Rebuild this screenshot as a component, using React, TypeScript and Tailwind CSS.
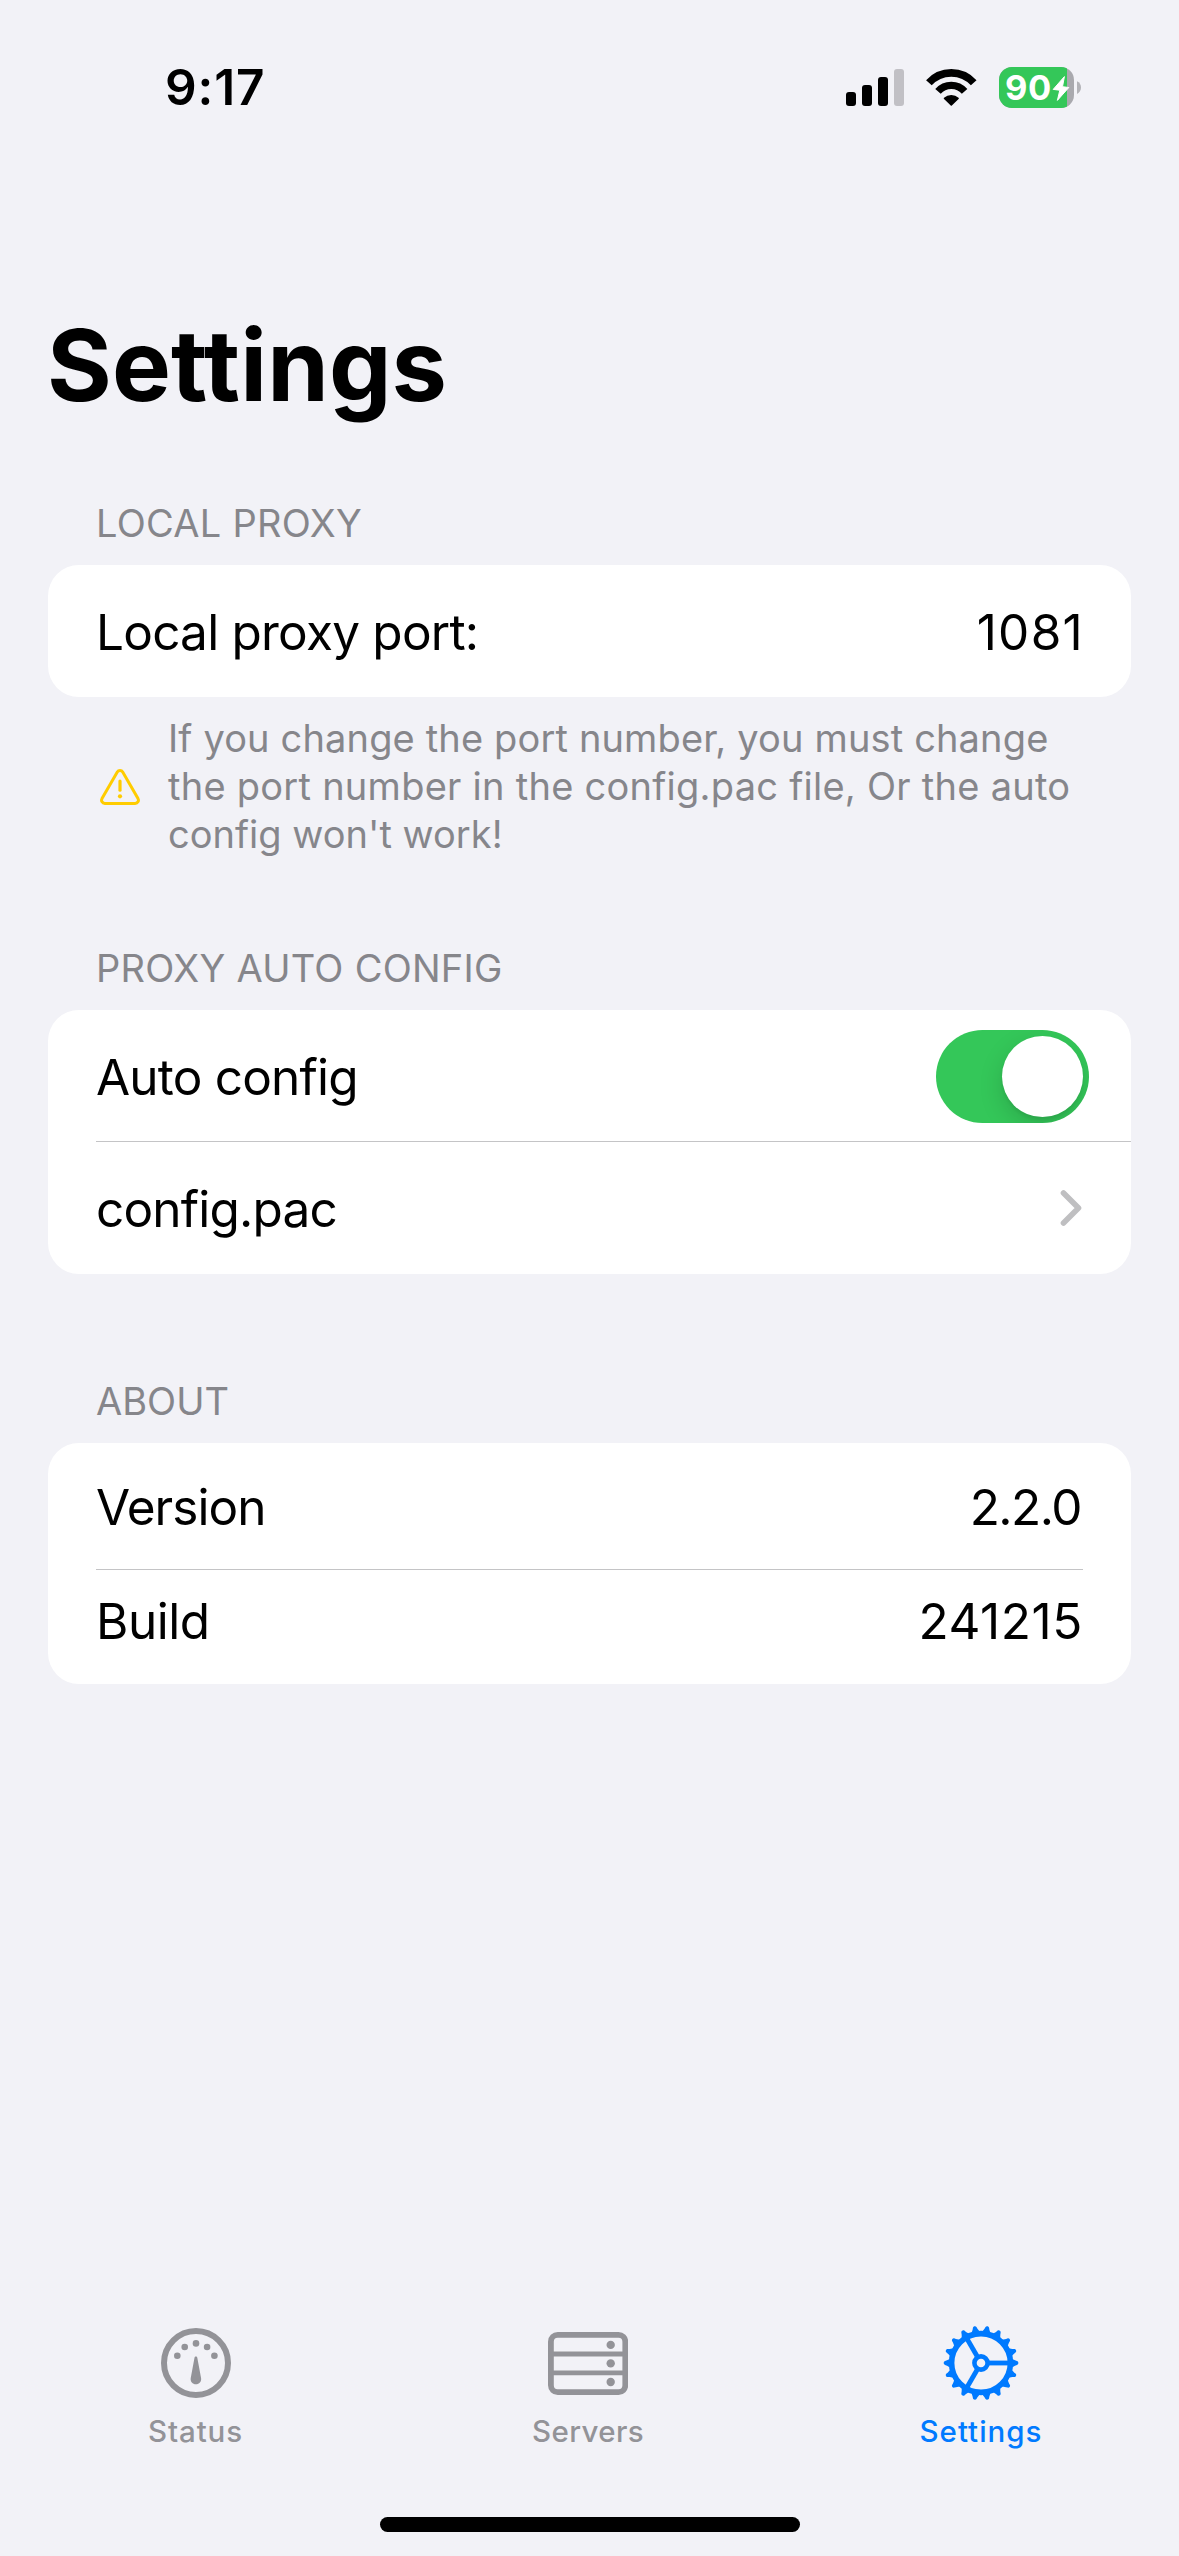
import type { ReactNode } from "react";

function SignalIcon() {
  return (
    <svg width="58" height="37" viewBox="0 0 58 37">
      <rect x="0" y="23" width="10" height="14" rx="3" fill="#000" />
      <rect x="16" y="16" width="10" height="21" rx="3" fill="#000" />
      <rect x="32" y="8" width="10" height="29" rx="3" fill="#000" />
      <rect x="48" y="0" width="10" height="37" rx="3" fill="#c1c0c5" />
    </svg>
  );
}

function WifiIcon() {
  return (
    <svg width="51" height="37" viewBox="0 0 51 37" fill="none" stroke="#000">
      <path d="M2.9 13.8A30.2 30.2 0 0 1 47.7 13.8" strokeWidth="7.6" />
      <path d="M12 22.3A17.7 17.7 0 0 1 38.6 22.3" strokeWidth="7.3" />
      <path d="M18.6 29.4A9.6 9.6 0 0 1 32 29.4L25.3 36Z" fill="#000" strokeWidth="1.6" strokeLinejoin="round" />
    </svg>
  );
}

function Battery() {
  return (
    <div className="relative flex h-[41px] w-[82px] items-start">
      <svg className="absolute inset-0" width="82" height="41" viewBox="0 0 82 41">
        <defs>
          <clipPath id="shell">
            <rect width="75" height="41" rx="13" />
          </clipPath>
        </defs>
        <g clipPath="url(#shell)">
          <rect width="75" height="41" fill="#a9a9ae" />
          <rect width="68" height="41" fill="#34c759" />
        </g>
        <path d="M78 14.2C80.6 15.3 82 17.8 82 20.6S80.6 25.9 78 27Z" fill="#b3b3b8" />
        <path
          d="M65.4 9.6L54.2 22.4L60.8 23.2L58.4 33.4L69.8 20.5L63.5 19.7Z"
          fill="#fff"
          stroke="#fff"
          strokeWidth="1"
          strokeLinejoin="round"
        />
      </svg>
      <span className="relative ml-[6px] text-[34.5px] leading-[41px] font-bold tracking-[0.5px] text-white">90</span>
    </div>
  );
}

function WarningIcon() {
  return (
    <svg width="40" height="36" viewBox="0 0 40 36" fill="none" stroke="#ffcc00" strokeWidth="3">
      <path
        d="M17.3 3.1C18.5 1.1 21.5 1.1 22.7 3.1L38 29.6C39.2 31.8 37.7 34.4 35.2 34.4H4.8C2.3 34.4 .8 31.8 2 29.6Z"
        strokeLinejoin="round"
      />
      <path d="M20 12V21.2" strokeWidth="3.2" strokeLinecap="round" />
      <circle cx="20" cy="27.3" r="2.1" fill="#ffcc00" stroke="none" />
    </svg>
  );
}

function GaugeIcon() {
  return (
    <svg width="70" height="70" viewBox="0 0 70 70" fill="currentColor">
      <circle cx="35" cy="35" r="32" fill="none" stroke="currentColor" strokeWidth="6" />
      <circle cx="16.3" cy="27.7" r="3.3" />
      <circle cx="23.7" cy="19" r="3.3" />
      <circle cx="35" cy="15.4" r="3.3" />
      <circle cx="46.1" cy="19" r="3.3" />
      <circle cx="53.4" cy="27.7" r="3.3" />
      <path d="M33.5 29.8C33.7 28.1 36.1 28.1 36.3 29.8L40.1 50.2C40.6 53.6 38.2 56.2 34.9 56.2S29.2 53.6 29.7 50.2Z" />
    </svg>
  );
}

function ServersIcon() {
  return (
    <svg width="80" height="63" viewBox="0 0 80 63" fill="currentColor">
      <rect x="2.9" y="2.9" width="74.4" height="57.2" rx="6.8" fill="none" stroke="currentColor" strokeWidth="5.8" />
      <path d="M3 22H77M3 40.9H77" stroke="currentColor" strokeWidth="4.8" />
      <circle cx="62.7" cy="12.9" r="4.2" />
      <circle cx="62.7" cy="31.4" r="4.2" />
      <circle cx="62.7" cy="50" r="4.2" />
    </svg>
  );
}

const teeth = Array.from({ length: 18 }, (_, i) => i * 20);
const spokes = [0, 120, 240];

function GearIcon() {
  return (
    <svg width="76" height="76" viewBox="-38 -38 76 76" fill="currentColor">
      <circle r="29.4" fill="none" stroke="currentColor" strokeWidth="5.6" />
      <circle r="6.6" fill="none" stroke="currentColor" strokeWidth="4.6" />
      {teeth.map((a) => (
        <path
          key={a}
          d="M31 -4.2C33 -3.4 34 -2.4 36 -1.9C37.8 -1.4 37.8 1.4 36 1.9C34 2.4 33 3.4 31 4.2Z"
          transform={`rotate(${a})`}
        />
      ))}
      {spokes.map((a) => (
        <path key={a} d="M8 0H28" stroke="currentColor" strokeWidth="4.8" transform={`rotate(${a})`} />
      ))}
    </svg>
  );
}

function SectionTitle({ children }: { children: ReactNode }) {
  return <h2 className="ml-[96px] h-[46px] text-[38px] leading-[46px] text-[#86868b]">{children}</h2>;
}

function Card({ children }: { children: ReactNode }) {
  return <div className="mx-12 mt-[19px] overflow-hidden rounded-[31px] bg-white">{children}</div>;
}

function Tab({ icon, children, active }: { icon: ReactNode; children: ReactNode; active?: boolean }) {
  return (
    <div className={active ? "flex flex-1 flex-col items-center text-[#007aff]" : "flex flex-1 flex-col items-center text-[#939398]"}>
      <div className="flex h-[76px] items-center">{icon}</div>
      <div className="mt-3 h-9 text-[29.5px] leading-9 font-medium">{children}</div>
    </div>
  );
}

export default function App() {
  return (
    <div className="flex h-[2556px] w-[1179px] flex-col overflow-hidden bg-[#f2f2f7] font-['Inter',sans-serif] text-[49.5px] leading-[60px] text-black">
      <header className="flex h-[175px] shrink-0 items-center justify-between pr-[98px] pl-[165px]">
        <span className="pb-px font-semibold tracking-[0.9px]">9:17</span>
        <div className="flex items-center gap-[22px]">
          <SignalIcon />
          <WifiIcon />
          <Battery />
        </div>
      </header>

      <h1 className="mt-[130px] ml-[47px] text-[99px] leading-[120px] font-bold tracking-[0.1px]">Settings</h1>

      <section className="mt-[75px]">
        <SectionTitle>
          <span className="tracking-[0.27px]">LOCAL PROXY</span>
        </SectionTitle>
        <Card>
          <div className="flex h-[132px] items-center justify-between px-12 pt-[2px]">
            <span className="tracking-[-0.77px]">Local proxy port:</span>
            <span className="mr-[-1px] tracking-[1.3px]">1081</span>
          </div>
        </Card>
        <div className="mt-[17px] ml-[100px] flex items-center gap-7">
          <div className="pt-[2px]">
            <WarningIcon />
          </div>
          <p className="text-[38px] leading-12 whitespace-nowrap text-[#86868b]">
            <span className="block tracking-[0.15px]">If you change the port number, you must change</span>
            <span className="block tracking-[0.26px]">the port number in the config.pac file, Or the auto</span>
            <span className="block tracking-[0.02px]">config won't work!</span>
          </p>
        </div>
      </section>

      <section className="mt-[87px]">
        <SectionTitle>
          <span className="tracking-[0.26px]">PROXY AUTO CONFIG</span>
        </SectionTitle>
        <Card>
          <div className="ml-12 flex h-[132px] items-center justify-between border-b border-[#c4c4c6] pt-[2px] pr-[42px]">
            <span className="tracking-[-0.8px]">Auto config</span>
            <div className="flex h-[93px] w-[153px] items-center justify-end overflow-hidden rounded-full bg-[#34c759] pr-[6px]">
              <div className="size-[81px] rounded-full bg-white shadow-[0_9px_24px_rgba(0,0,0,0.15),0_3px_3px_rgba(0,0,0,0.06)]" />
            </div>
          </div>
          <div className="flex h-[132px] items-center justify-between pr-[49px] pl-12">
            <span className="pt-[2px] tracking-[-0.81px]">config.pac</span>
            <svg width="22" height="36" viewBox="0 0 22 36" fill="none" stroke="#bfbfc1" strokeWidth="5.6" strokeLinecap="round" strokeLinejoin="round">
              <path d="M3.5 3L18.5 18L3.5 33" />
            </svg>
          </div>
        </Card>
      </section>

      <section className="mt-[104px]">
        <SectionTitle>
          <span className="tracking-[0px]">ABOUT</span>
        </SectionTitle>
        <Card>
          <div className="mx-12 flex h-[127px] items-center justify-between border-b border-[#c4c4c6] pt-[2px]">
            <span className="tracking-[-0.95px]">Version</span>
            <span className="mr-[2px] tracking-[-1.5px]">2.2.0</span>
          </div>
          <div className="mx-12 flex h-[114px] items-center justify-between pb-[12px]">
            <span className="tracking-[-0.48px]">Build</span>
            <span className="tracking-[0.6px]">241215</span>
          </div>
        </Card>
      </section>

      <nav className="mt-auto grid grid-cols-[391px_394px_392px]">
        <Tab icon={<GaugeIcon />}>
          <span className="tracking-[0.9px]">Status</span>
        </Tab>
        <Tab icon={<ServersIcon />}>
          <span className="tracking-[0.4px]">Servers</span>
        </Tab>
        <Tab icon={<GearIcon />} active>
          <span className="tracking-[1px]">Settings</span>
        </Tab>
      </nav>
      <div className="mx-auto mt-[68px] mb-6 h-[15px] w-[420px] shrink-0 rounded-full bg-black" />
    </div>
  );
}
